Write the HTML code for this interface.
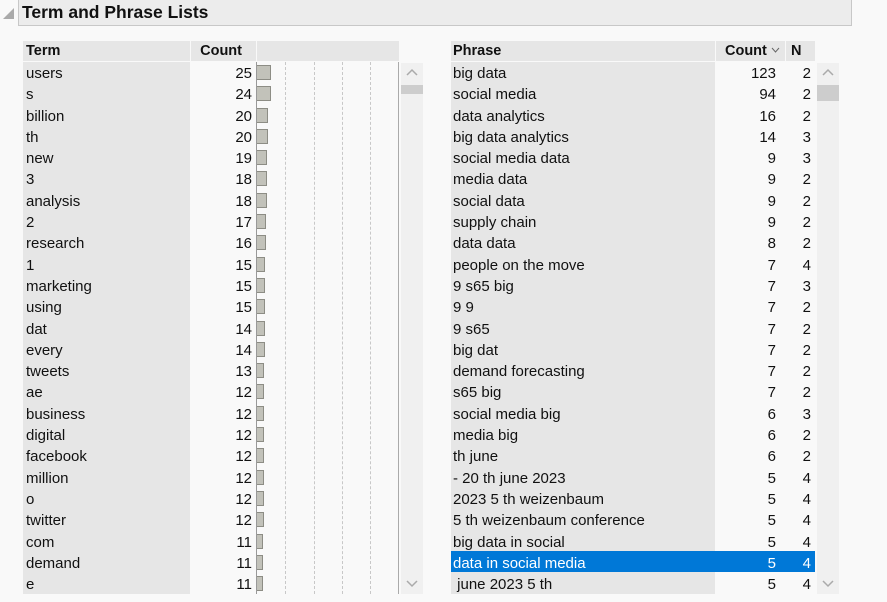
<!DOCTYPE html>
<html><head><meta charset="utf-8"><style>
*{margin:0;padding:0;box-sizing:border-box}
body{width:887px;height:602px;background:#f9f9f9;font-family:"Liberation Sans",sans-serif;font-size:15px;color:#111;position:relative;overflow:hidden}
.abs{position:absolute}
.title{left:18px;top:0;width:834px;height:26px;background:#ececec;border:1px solid #c8c8c8;border-top:none;font-weight:bold;font-size:17.5px;line-height:24px;padding-left:3px}
.tri{left:3px;top:8px;width:0;height:0;border-left:11px solid transparent;border-bottom:11px solid #aaa}
.hdr{top:41px;height:20px;background:#e6e6e6;font-weight:bold;line-height:21px;font-size:14.5px}
.col{top:63px;line-height:21.3px}
.col>div{height:21.3px;white-space:nowrap}
.r{text-align:right}
.sb{background:#f0f0f0}
.col .bar{height:15px;position:relative;top:2px;background:#c2c2ba;border:1px solid #8d8d85;border-left:none}
.dash{top:62px;height:532px;border-left:1px dashed #c8c8c8}
</style></head><body>
<div class="abs title">Term and Phrase Lists</div>
<div class="abs tri"></div>

<div class="abs hdr" style="left:23px;width:167px;padding-left:3px">Term</div>
<div class="abs hdr r" style="left:191px;width:65px;padding-right:14px">Count</div>
<div class="abs hdr" style="left:257px;width:142px"></div>
<div class="abs" style="left:23px;top:62px;width:167px;height:532px;background:#e6e6e6"></div>
<div class="abs col" style="left:26px;width:160px">
<div>users</div><div>s</div><div>billion</div><div>th</div><div>new</div><div>3</div><div>analysis</div><div>2</div><div>research</div><div>1</div><div>marketing</div><div>using</div><div>dat</div><div>every</div><div>tweets</div><div>ae</div><div>business</div><div>digital</div><div>facebook</div><div>million</div><div>o</div><div>twitter</div><div>com</div><div>demand</div><div>e</div></div>
<div class="abs col r" style="left:191px;width:61px">
<div>25</div><div>24</div><div>20</div><div>20</div><div>19</div><div>18</div><div>18</div><div>17</div><div>16</div><div>15</div><div>15</div><div>15</div><div>14</div><div>14</div><div>13</div><div>12</div><div>12</div><div>12</div><div>12</div><div>12</div><div>12</div><div>12</div><div>11</div><div>11</div><div>11</div></div>
<div class="abs dash" style="left:285px"></div>
<div class="abs dash" style="left:314px"></div>
<div class="abs dash" style="left:342px"></div>
<div class="abs dash" style="left:370px"></div>
<div class="abs" style="left:256px;top:62px;width:1px;height:532px;background:#999"></div>
<div class="abs" style="left:398px;top:62px;width:1px;height:532px;background:#aaa"></div>
<div class="abs col" style="left:257px;width:20px">
<div><div class="bar" style="width:14px"></div></div><div><div class="bar" style="width:14px"></div></div><div><div class="bar" style="width:11px"></div></div><div><div class="bar" style="width:11px"></div></div><div><div class="bar" style="width:10px"></div></div><div><div class="bar" style="width:10px"></div></div><div><div class="bar" style="width:10px"></div></div><div><div class="bar" style="width:9px"></div></div><div><div class="bar" style="width:9px"></div></div><div><div class="bar" style="width:8px"></div></div><div><div class="bar" style="width:8px"></div></div><div><div class="bar" style="width:8px"></div></div><div><div class="bar" style="width:8px"></div></div><div><div class="bar" style="width:8px"></div></div><div><div class="bar" style="width:7px"></div></div><div><div class="bar" style="width:7px"></div></div><div><div class="bar" style="width:7px"></div></div><div><div class="bar" style="width:7px"></div></div><div><div class="bar" style="width:7px"></div></div><div><div class="bar" style="width:7px"></div></div><div><div class="bar" style="width:7px"></div></div><div><div class="bar" style="width:7px"></div></div><div><div class="bar" style="width:6px"></div></div><div><div class="bar" style="width:6px"></div></div><div><div class="bar" style="width:6px"></div></div></div>
<div class="abs sb" style="left:401px;top:63px;width:22px;height:531px"></div>
<div class="abs" style="left:401px;top:85px;width:22px;height:9px;background:#cdcdcd"></div>
<svg class="abs" style="left:406px;top:68px" width="12" height="8"><path d="M1 7 L6 2 L11 7" fill="none" stroke="#aaa" stroke-width="1.5"/></svg>
<svg class="abs" style="left:406px;top:580px" width="12" height="8"><path d="M1 1 L6 6 L11 1" fill="none" stroke="#aaa" stroke-width="1.5"/></svg>

<div class="abs hdr" style="left:451px;width:264px;padding-left:2px">Phrase</div>
<div class="abs hdr" style="left:716px;width:69px;padding-left:9px">Count<svg style="margin-left:4px;vertical-align:2px" width="9" height="6"><path d="M1 1 L4.5 5 L8 1" fill="none" stroke="#666" stroke-width="1"/></svg></div>
<div class="abs hdr" style="left:786px;width:29px;padding-left:5px">N</div>
<div class="abs" style="left:451px;top:62px;width:264px;height:532px;background:#e6e6e6"></div>
<div class="abs" style="left:451px;top:551px;width:364px;height:21px;background:#0078d7"></div>
<div class="abs col" style="left:453px;width:260px">
<div>big data</div><div>social media</div><div>data analytics</div><div>big data analytics</div><div>social media data</div><div>media data</div><div>social data</div><div>supply chain</div><div>data data</div><div>people on the move</div><div>9 s65 big</div><div>9 9</div><div>9 s65</div><div>big dat</div><div>demand forecasting</div><div>s65 big</div><div>social media big</div><div>media big</div><div>th june</div><div>- 20 th june 2023</div><div>2023 5 th weizenbaum</div><div>5 th weizenbaum conference</div><div>big data in social</div><div style="color:#fff">data in social media</div><div>&nbsp;june 2023 5 th</div></div>
<div class="abs col r" style="left:716px;width:60px">
<div>123</div><div>94</div><div>16</div><div>14</div><div>9</div><div>9</div><div>9</div><div>9</div><div>8</div><div>7</div><div>7</div><div>7</div><div>7</div><div>7</div><div>7</div><div>7</div><div>6</div><div>6</div><div>6</div><div>5</div><div>5</div><div>5</div><div>5</div><div style="color:#fff">5</div><div>5</div></div>
<div class="abs col r" style="left:786px;width:25px">
<div>2</div><div>2</div><div>2</div><div>3</div><div>3</div><div>2</div><div>2</div><div>2</div><div>2</div><div>4</div><div>3</div><div>2</div><div>2</div><div>2</div><div>2</div><div>2</div><div>3</div><div>2</div><div>2</div><div>4</div><div>4</div><div>4</div><div>4</div><div style="color:#fff">4</div><div>4</div></div>
<div class="abs sb" style="left:817px;top:63px;width:22px;height:531px"></div>
<div class="abs" style="left:817px;top:85px;width:22px;height:16px;background:#cdcdcd"></div>
<svg class="abs" style="left:822px;top:68px" width="12" height="8"><path d="M1 7 L6 2 L11 7" fill="none" stroke="#aaa" stroke-width="1.5"/></svg>
<svg class="abs" style="left:822px;top:580px" width="12" height="8"><path d="M1 1 L6 6 L11 1" fill="none" stroke="#aaa" stroke-width="1.5"/></svg>
</body></html>
